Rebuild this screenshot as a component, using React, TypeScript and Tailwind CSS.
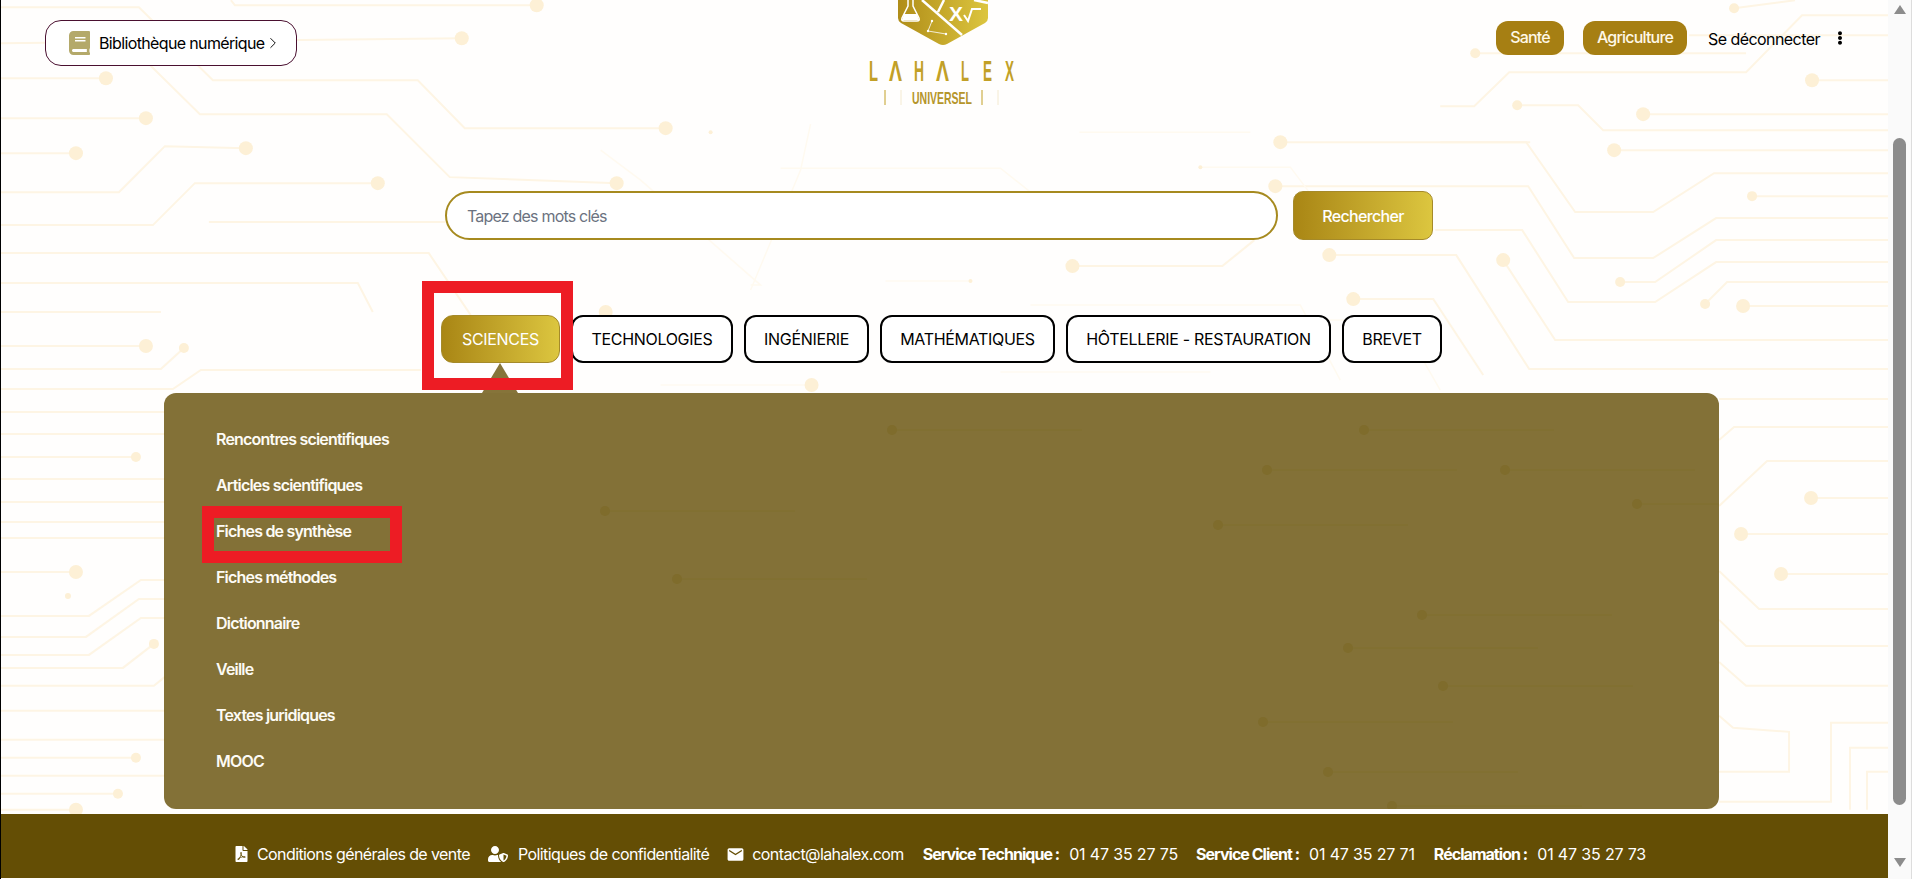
import { ChevronRight } from "lucide-react";
import { FaBook, FaEllipsisV, FaFilePdf, FaUserShield } from "react-icons/fa";
import { MdEmail } from "react-icons/md";

const STRONG_LINES = [
  "0,7 138,7 212,80 417,80 464,128 665,128",
  "0,43 461,38",
  "0,78 105,78",
  "0,118 145,118",
  "0,153 75,153",
  "0,192 118,192 164,146 245,148",
  "0,225 152,225 194,183 377,183",
  "0,253 428,253 470,315",
  "134,50 199,114 386,114 449,177 616,183",
  "230,0 234,5 536,5",
  "0,283 357,283 372,312",
  "208,222 445,222",
  "0,312 160,312",
  "0,346 145,346",
  "0,369 160,369 183,348",
  "0,389 172,389 200,370 420,370",
  "0,412 164,412",
  "0,434 164,434",
  "0,457 135,457",
  "0,479 164,479",
  "0,502 164,502",
  "0,522 164,522",
  "0,538 164,538",
  "0,572 75,572",
  "0,616 88,616 140,580 164,580",
  "0,637 85,637 138,599 164,599",
  "0,655 88,655 140,618 164,618",
  "0,668 122,668 153,644",
  "0,686 153,686 164,677",
  "0,711 164,711",
  "0,740 164,740",
  "0,758 135,758",
  "0,776 164,776",
  "0,794 117,794",
  "0,810 75,810",
  "1734,8 1795,0",
  "1440,106 1474,106 1509,72 1746,72 1802,15 1888,15",
  "1475,53 1746,53",
  "1689,35 1888,35",
  "1517,105 1578,105 1603,130 1888,130",
  "1643,114 1888,114",
  "1812,80 1888,80",
  "1614,150 1888,150",
  "1440,142 1526,142 1575,212 1653,212 1714,173 1888,173",
  "1752,196 1888,196",
  "1280,142 1530,142",
  "1275,186 1528,186 1574,258 1653,258 1716,218 1888,218",
  "1435,230 1522,230 1568,302 1655,302 1716,262 1888,262",
  "1329,255 1456,255 1529,369 1888,369",
  "1503,260 1555,340 1888,340",
  "1353,299 1433,299 1483,375",
  "1620,282 1655,282 1716,240 1888,240",
  "1705,304 1727,282 1888,282",
  "1743,306 1888,306",
  "1072,266 1222,266 1254,240",
  "1719,399 1888,399",
  "1719,440 1734,427 1888,427",
  "1719,506 1767,461 1888,461",
  "1811,498 1888,498",
  "1741,534 1888,534",
  "1781,574 1888,574",
  "1719,571 1759,609 1888,609",
  "1719,620 1746,646 1888,646",
  "1719,662 1746,686 1888,686",
  "1719,716 1733,728 1789,732 1789,772 1719,772",
  "1888,723 1831,723 1831,802 1719,802",
  "1888,748 1850,748 1850,810",
  "1888,772 1867,772 1867,810",
];

const FAINT_LINES = [
  "1079,132 1250,132",
  "885,281 970,281",
  "660,385 811,385",
  "750,290 800,170 810,124",
  "780,168 1000,168 1040,200",
  "600,150 640,180 760,285 750,285",
  "1000,372 1210,372",
  "1030,305 1300,305 1340,380",
  "1200,167 1290,167 1330,220",
  "1190,320 1400,320 1440,390",
];

const BIG_DOTS: [number, number, number][] = [
  [536, 5, 7], [461, 38, 7], [105, 78, 7], [145, 118, 7], [75, 153, 7], [245, 148, 7],
  [377, 183, 7], [616, 183, 7], [665, 128, 7], [1734, 8, 5], [1475, 53, 5], [1517, 105, 5],
  [1643, 114, 7], [1812, 80, 7], [1614, 150, 7], [1752, 196, 5], [1280, 142, 7], [1275, 186, 7],
  [1329, 255, 7], [1503, 260, 7], [1353, 299, 7], [1620, 282, 5], [1705, 304, 5], [1743, 306, 7],
  [1072, 266, 7], [605, 312, 7], [811, 385, 7], [145, 346, 7], [183, 348, 5], [135, 457, 5],
  [75, 572, 7], [67, 596, 3], [153, 644, 5], [135, 758, 5], [117, 794, 5], [75, 810, 7],
  [1811, 498, 7], [1741, 534, 7], [1781, 574, 7], [710, 132, 2], [1200, 167, 2], [970, 281, 2],
];

const PANEL_DOTS: [number, number][] = [
  [728, 37], [1200, 37], [1103, 77], [1341, 77], [1473, 111], [1054, 132], [441, 118], [513, 186],
  [1258, 222], [1184, 255], [1279, 293], [1099, 329], [1164, 379], [1228, 413],
];

const MENU_ITEMS = [
  "Rencontres scientifiques",
  "Articles scientifiques",
  "Fiches de synthèse",
  "Fiches méthodes",
  "Dictionnaire",
  "Veille",
  "Textes juridiques",
  "MOOC",
];

const LOGO_LETTERS: [string, number, number][] = [
  ["L", 1, 9],
  ["Λ", 21, 13],
  ["H", 46, 10],
  ["Λ", 68, 13],
  ["L", 93, 8],
  ["E", 115, 9],
  ["X", 137, 9],
];

function CircuitBackground() {
  return (
    <svg
      aria-hidden
      viewBox="0 0 1888 879"
      className="absolute left-0 top-0 h-[879px] w-[1887px]"
      fill="none"
    >
      {STRONG_LINES.map((points) => (
        <polyline key={points} points={points} stroke="#fef5e4" strokeWidth="2" />
      ))}
      {FAINT_LINES.map((points) => (
        <polyline key={points} points={points} stroke="#fffaf0" strokeWidth="1.5" />
      ))}
      {BIG_DOTS.map(([cx, cy, r]) => (
        <circle key={`${cx}-${cy}`} cx={cx} cy={cy} r={r} fill="#fdf0d6" />
      ))}
    </svg>
  );
}

function Logo() {
  return (
    <svg
      viewBox="0 0 148 108"
      className="h-[108px] w-[148px] overflow-visible"
      aria-label="Lahalex Universel"
    >
      <defs>
        <linearGradient id="gold" x1="0" x2="1" y1="0" y2="0">
          <stop offset="0" stopColor="#b08d18" />
          <stop offset="1" stopColor="#dcc53f" />
        </linearGradient>
      </defs>
      <path
        d="M30 0 V18 Q30 21 33 23 L71 44 Q75 46 79 44 L117 23 Q120 21 120 18 V0 Z"
        fill="url(#gold)"
      />
      <path d="M54 0 L94 35 M76 0 L70 12 M106 0 L120 3" stroke="#fff" strokeWidth="2.5" fill="none" />
      <path
        d="M40 0 V6 L34 18 Q33 21 36 21 H49 Q52 21 51 18 L45 6 V0"
        fill="none"
        stroke="#fff"
        strokeWidth="1.5"
      />
      <path d="M36 14 H49 L51 20 H34 Z" fill="#fff" />
      <path d="M64 21 L60 31 L78 34" stroke="#fff" strokeWidth="0.8" fill="none" />
      <circle cx="64" cy="21" r="1.2" fill="#fff" />
      <circle cx="60" cy="31" r="1.2" fill="#fff" />
      <circle cx="78" cy="34" r="1.2" fill="#fff" />
      <text
        x="81"
        y="21"
        fill="#fff"
        fontFamily="Liberation Sans, sans-serif"
        fontWeight="700"
        fontSize="21"
      >
        X
      </text>
      <path d="M96 15 L100 21 L104 9 H113" stroke="#fff" strokeWidth="2" fill="none" />
      {LOGO_LETTERS.map(([letter, x, width]) => (
        <text
          key={x}
          x={x}
          y="81"
          textLength={width}
          lengthAdjust="spacingAndGlyphs"
          fill="#c2a026"
          fontFamily="Liberation Sans, sans-serif"
          fontWeight="700"
          fontSize="29"
        >
          {letter}
        </text>
      ))}
      <text
        x="44"
        y="104"
        textLength="60"
        lengthAdjust="spacingAndGlyphs"
        fill="#b5952a"
        fontFamily="Liberation Sans, sans-serif"
        fontWeight="700"
        fontSize="17"
      >
        UNIVERSEL
      </text>
      <path d="M17 90 V105 M114 90 V105" stroke="#c2a026" strokeWidth="1" />
      <path d="M33 90 V105 M130 90 V105" stroke="#f4ead0" strokeWidth="1" />
    </svg>
  );
}

function Header() {
  return (
    <header className="relative flex h-[191px] items-start">
      <div className="w-[867px] pl-[44px] pt-5">
        <button
          type="button"
          className="flex h-[46px] w-[252px] items-center rounded-2xl border border-[#4a1030] bg-white pl-[23px] text-base tracking-[-0.04em] text-black"
        >
          <FaBook className="h-6 w-[21px] text-[#b4a96a]" />
          <span className="ml-[9px]">Bibliothèque numérique</span>
          <ChevronRight className="-ml-[1px] h-[18px] w-[18px]" strokeWidth={1.25} />
        </button>
      </div>
      <Logo />
      <div className="flex items-start pl-[480px] pt-[21px]">
        <a className="flex h-[34px] w-[68px] items-center justify-center rounded-xl bg-[#a67f13] pb-[2px] text-base font-medium tracking-[-0.05em] text-[#fff8e6]">
          Santé
        </a>
        <a className="ml-[19px] flex h-[34px] w-[104px] items-center justify-center rounded-xl bg-[#a67f13] pb-[2px] text-base font-medium tracking-[-0.05em] text-[#fff8e6]">
          Agriculture
        </a>
        <a className="ml-[21px] mt-[8px] text-base leading-5 tracking-[-0.035em] text-black">
          Se déconnecter
        </a>
        <FaEllipsisV className="ml-[17px] mt-[10px] h-[14px] w-[6px] text-black" />
      </div>
    </header>
  );
}

function SearchRow() {
  return (
    <div className="relative flex h-[49px] pl-[444px]">
      <div className="flex h-[49px] w-[833px] items-center rounded-full border-2 border-[#a68a1f] bg-white pl-[20px] text-base tracking-[-0.05em] text-[#6b7280]">
        Tapez des mots clés
      </div>
      <button
        type="button"
        className="ml-[15px] h-[49px] w-[140px] rounded-[10px] border border-[#a58a2a] bg-gradient-to-r from-[#a98614] to-[#dcc63f] text-base font-medium tracking-[-0.04em] text-white"
      >
        Rechercher
      </button>
    </div>
  );
}

function Tabs() {
  return (
    <div className="relative z-10 mt-[75px] flex h-[48px] gap-[11px] pl-[440px] text-base tracking-[-0.02em] text-black">
      <div className="relative w-[119px]">
        <button
          type="button"
          className="h-12 w-full rounded-xl border border-[#a58a2a] bg-gradient-to-r from-[#a98614] to-[#dcc63f] text-white"
        >
          SCIENCES
        </button>
        <span className="absolute left-[41px] top-[48px] h-0 w-0 border-x-[18px] border-b-[30px] border-x-transparent border-b-[#86743a]" />
        <span className="absolute -left-[19px] -top-[34px] h-[109px] w-[151px] border-[12px] border-[#ed1c24]" />
      </div>
      <button type="button" className="h-12 w-[162px] rounded-xl border-2 border-black bg-white">
        TECHNOLOGIES
      </button>
      <button type="button" className="h-12 w-[125px] rounded-xl border-2 border-black bg-white">
        INGÉNIERIE
      </button>
      <button type="button" className="h-12 w-[175px] rounded-xl border-2 border-black bg-white">
        MATHÉMATIQUES
      </button>
      <button type="button" className="h-12 w-[265px] rounded-xl border-2 border-black bg-white">
        HÔTELLERIE - RESTAURATION
      </button>
      <button type="button" className="h-12 w-[100px] rounded-xl border-2 border-black bg-white">
        BREVET
      </button>
    </div>
  );
}

function MenuPanel() {
  return (
    <section className="relative ml-[163px] mt-[30px] h-[416px] w-[1555px] rounded-xl bg-[#644e05]/80 pl-[52px] pt-[23px]">
      <svg
        aria-hidden
        viewBox="0 0 1555 416"
        className="absolute left-0 top-0 h-[416px] w-[1555px]"
      >
        {PANEL_DOTS.map(([cx, cy]) => (
          <g key={`${cx}-${cy}`}>
            <line x1={cx} y1={cy} x2={cx + 190} y2={cy} stroke="#80702f" strokeWidth="1" />
            <circle cx={cx} cy={cy} r="5" fill="#7f6c2c" />
          </g>
        ))}
      </svg>
      <ul className="relative">
        {MENU_ITEMS.map((item) => (
          <li
            key={item}
            className="relative flex h-[46px] items-center text-base font-semibold tracking-[-0.05em] text-[#fdfbf5]"
          >
            {item}
            {item === "Fiches de synthèse" ? (
              <span className="absolute -left-[14px] top-[-2px] h-[57px] w-[200px] border-[12px] border-[#ed1c24]" />
            ) : null}
          </li>
        ))}
      </ul>
    </section>
  );
}

function Footer() {
  return (
    <footer className="relative mt-[5px] flex h-[64px] items-center bg-[#644e05] pl-[234px] pt-[16px] text-base tracking-[-0.037em] text-white">
      <FaFilePdf className="h-[16px] w-[13px]" />
      <span className="ml-[9px]">Conditions générales de vente</span>
      <FaUserShield className="ml-[18px] h-[16px] w-[20px]" />
      <span className="ml-[10px]">Politiques de confidentialité</span>
      <MdEmail className="ml-[17px] h-[19px] w-[19px]" />
      <span className="ml-[7px]">contact@lahalex.com</span>
      <strong className="ml-[19px] font-bold tracking-[-0.06em]">Service Technique :</strong>
      <span className="ml-[10px] tracking-[-0.01em]">01 47 35 27 75</span>
      <strong className="ml-[18px] font-bold tracking-[-0.06em]">Service Client :</strong>
      <span className="ml-[10px] tracking-[-0.01em]">01 47 35 27 71</span>
      <strong className="ml-[19px] font-bold tracking-[-0.06em]">Réclamation :</strong>
      <span className="ml-[10px] tracking-[-0.01em]">01 47 35 27 73</span>
    </footer>
  );
}

function Scrollbar() {
  return (
    <div className="flex h-[879px] w-[24px] flex-col items-center border-r border-[#dddddd] bg-[#fafafa]">
      <span className="mt-[5px] h-0 w-0 border-x-[6px] border-b-[9px] border-x-transparent border-b-[#8c8c8c]" />
      <span className="mt-[124px] h-[667px] w-[13px] rounded-full bg-[#8c8c8c]" />
      <span className="mt-[53px] h-0 w-0 border-x-[6px] border-t-[9px] border-x-transparent border-t-[#8c8c8c]" />
    </div>
  );
}

export default function App() {
  return (
    <div className="flex h-[879px] w-[1912px] overflow-hidden bg-white [font-family:Inter,sans-serif]">
      <main className="relative h-[879px] w-[1888px] border-l border-black bg-[#fffefd]">
        <CircuitBackground />
        <Header />
        <SearchRow />
        <Tabs />
        <MenuPanel />
        <Footer />
      </main>
      <Scrollbar />
    </div>
  );
}
